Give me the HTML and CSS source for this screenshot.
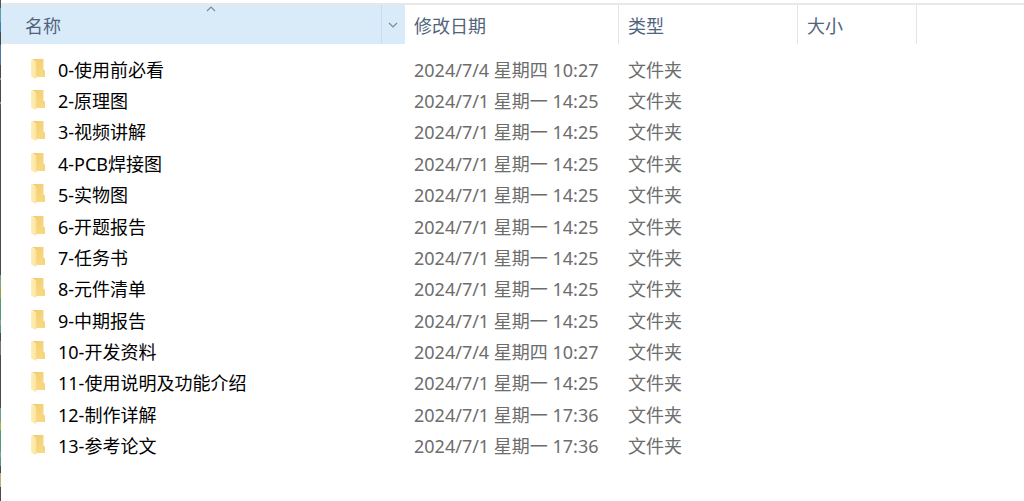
FILE: index.html
```html
<!DOCTYPE html>
<html lang="zh-CN">
<head>
<meta charset="utf-8">
<title>文件列表</title>
<link rel="stylesheet" href="styles.css">
</head>
<body>
<svg class="symbols" aria-hidden="true">
  <defs>
    <linearGradient id="back" x1="0" y1="0" x2="1" y2="1"><stop offset="0" stop-color="#efcb72"/><stop offset="1" stop-color="#fbdc86"/></linearGradient>
    <linearGradient id="flap" x1="0" y1="0" x2="1" y2="0"><stop offset="0" stop-color="#ffeebb"/><stop offset="1" stop-color="#fce49c"/></linearGradient>
    <symbol id="folder" viewBox="0 0 14 20">
      <path d="M1 0H12.500V10.500L14 12V18H4V2Z" fill="url(#back)"/>
      <path d="M11.500 11L12.500 10.500L14 12V18H11.500Z" fill="#f6d67d"/>
      <path d="M0 .3L4.500 2.300Q5.300 2.800 5.300 3.500V20L.8 18Q0 17.600 0 17Z" fill="url(#flap)"/>
    </symbol>
  </defs>
</svg>
<div class="window">
  <div class="backdrop"></div>
  <main class="pane">
    <table class="files">
      <colgroup><col class="col-name"><col class="col-date"><col class="col-type"><col class="col-size"><col></colgroup>
      <thead>
        <tr>
          <th class="sorted" aria-sort="ascending">
            <div class="head">
              <button class="label">名称</button>
              <button class="filter" aria-label="筛选"><svg width="10" height="6" viewBox="0 0 10 6"><path d="M1 1L5 5L9 1"/></svg></button>
              <svg class="arrow" width="10" height="6" viewBox="0 0 10 6"><path d="M1 5L5 1L9 5"/></svg>
            </div>
          </th>
          <th><div class="head"><button class="label">修改日期</button></div></th>
          <th><div class="head"><button class="label">类型</button></div></th>
          <th><div class="head"><button class="label">大小</button></div></th>
          <td></td>
        </tr>
      </thead>
      <tbody>
        <tr class="spacer"><td colspan="5"></td></tr>
        <tr><td><span class="name"><svg class="icon"><use href="#folder"/></svg>0-使用前必看</span></td><td>2024/7/4 星期四 10:27</td><td>文件夹</td><td></td><td></td></tr>
        <tr><td><span class="name"><svg class="icon"><use href="#folder"/></svg>2-原理图</span></td><td>2024/7/1 星期一 14:25</td><td>文件夹</td><td></td><td></td></tr>
        <tr><td><span class="name"><svg class="icon"><use href="#folder"/></svg>3-视频讲解</span></td><td>2024/7/1 星期一 14:25</td><td>文件夹</td><td></td><td></td></tr>
        <tr><td><span class="name"><svg class="icon"><use href="#folder"/></svg>4-PCB焊接图</span></td><td>2024/7/1 星期一 14:25</td><td>文件夹</td><td></td><td></td></tr>
        <tr><td><span class="name"><svg class="icon"><use href="#folder"/></svg>5-实物图</span></td><td>2024/7/1 星期一 14:25</td><td>文件夹</td><td></td><td></td></tr>
        <tr><td><span class="name"><svg class="icon"><use href="#folder"/></svg>6-开题报告</span></td><td>2024/7/1 星期一 14:25</td><td>文件夹</td><td></td><td></td></tr>
        <tr><td><span class="name"><svg class="icon"><use href="#folder"/></svg>7-任务书</span></td><td>2024/7/1 星期一 14:25</td><td>文件夹</td><td></td><td></td></tr>
        <tr><td><span class="name"><svg class="icon"><use href="#folder"/></svg>8-元件清单</span></td><td>2024/7/1 星期一 14:25</td><td>文件夹</td><td></td><td></td></tr>
        <tr><td><span class="name"><svg class="icon"><use href="#folder"/></svg>9-中期报告</span></td><td>2024/7/1 星期一 14:25</td><td>文件夹</td><td></td><td></td></tr>
        <tr><td><span class="name"><svg class="icon"><use href="#folder"/></svg>10-开发资料</span></td><td>2024/7/4 星期四 10:27</td><td>文件夹</td><td></td><td></td></tr>
        <tr><td><span class="name"><svg class="icon"><use href="#folder"/></svg>11-使用说明及功能介绍</span></td><td>2024/7/1 星期一 14:25</td><td>文件夹</td><td></td><td></td></tr>
        <tr><td><span class="name"><svg class="icon"><use href="#folder"/></svg>12-制作详解</span></td><td>2024/7/1 星期一 17:36</td><td>文件夹</td><td></td><td></td></tr>
        <tr><td><span class="name"><svg class="icon"><use href="#folder"/></svg>13-参考论文</span></td><td>2024/7/1 星期一 17:36</td><td>文件夹</td><td></td><td></td></tr>
      </tbody>
    </table>
  </main>
</div>
</body>
</html>
```
FILE: styles.css
```css
* { box-sizing: border-box; }

body {
  margin: 0;
  background: #fff;
  color: #6d6d6d;
  font: 18px/28px "Noto Sans", "Noto Sans CJK SC", sans-serif;
}

.symbols { position: absolute; width: 0; height: 0; }

.window {
  display: grid;
  grid-template-columns: 1px 1fr;
  min-height: 100vh;
}

/* Sliver of the desktop showing past the window edge */
.backdrop {
  background: linear-gradient(#555 8px, #5aa0a8 8px 22px, #3f7fb0 22px 32px, #4a4648 32px 45px, #4a77a5 45px 65px,
    #4a4a4c 65px 78px, #a58b98 78px 80px, #4a4a4c 80px 102px, #a89568 102px 104px, #4a5570 104px 110px, #4a4a4c 110px 275px,
    #6fa08a 275px 280px, #929b96 280px 286px, #93a548 286px 298px, #559878 298px 320px, #87a095 320px 325px,
    #559878 325px 333px, #4a4a4c 333px 341px, #806f73 341px 355px, #4a4a4c 355px 408px, #6fa08a 408px 422px,
    #a3b34a 422px 430px, #559878 430px 452px, #87a095 452px 457px, #559878 457px 466px, #4a4a4c 466px 473px,
    #bfa986 473px 487px, #4a4a4c 487px);
}

.pane {
  padding-top: 3px;
}

.files {
  width: 100%;
  height: 459px;
  table-layout: fixed;
  border-collapse: separate;
  border-spacing: 0;
  border-top: 2px solid #e8e8e8;
}

.col-name { width: 404px; }
.col-date { width: 214px; }
.col-type { width: 179px; }
.col-size { width: 119px; }

th, td {
  padding: 0 0 0 9px;
  text-align: left;
  font-weight: 400;
  white-space: nowrap;
}

thead tr { height: 39px; }

th {
  padding: 0;
  border-right: 1px solid #e5e5e5;
}

.head { position: relative; display: flex; height: 39px; }

button {
  margin: 0;
  padding: 0;
  border: 0;
  background: none;
  color: #50647c;
  font: inherit;
  text-align: left;
}

.label { flex: 1; padding: 2px 0 0 9px; }

.sorted { background: #d9ebf9; border-right: 0; }
.sorted .label { padding-left: 24px; }

.filter {
  width: 24px;
  padding-right: 2px;
  border-left: 1px solid #c6ddee;
  text-align: center;
  line-height: 0;
}

.head path { fill: none; stroke: #7d8b98; stroke-width: 1.2; }

.arrow { position: absolute; top: 1px; left: 50%; margin-left: 3px; }

.spacer, .spacer td { height: 10px; padding: 0; }

.name {
  display: flex;
  align-items: center;
  gap: 13px;
  padding-left: 21px;
  color: #000;
}

.icon { width: 14px; height: 20px; margin-bottom: 2px; }
```
